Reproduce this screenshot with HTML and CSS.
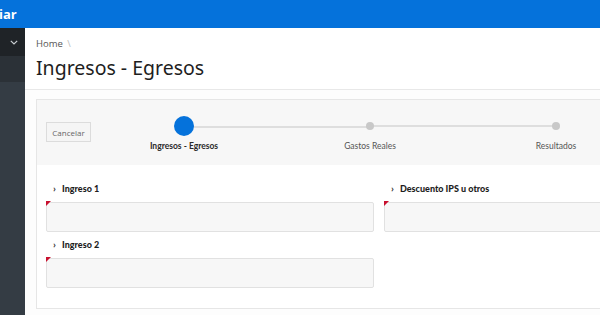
FILE: index.html
```html
<!DOCTYPE html>
<html lang="es">
<head>
<meta charset="utf-8">
<title>Ingresos - Egresos</title>
<link rel="stylesheet" href="styles.css">
</head>
<body>
<header class="topbar"><span class="app-name">iar</span></header>
<div class="layout">
  <nav class="sidebar">
    <div class="nav-item nav-top">
      <svg class="chev-down" width="8" height="5" viewBox="0 0 8 5"><path d="M0.8 0.8 L4 4 L7.2 0.8" fill="none" stroke="#c9ced2" stroke-width="1.2"/></svg>
    </div>
    <div class="nav-item nav-second"></div>
    <div class="nav-rest"></div>
  </nav>
  <main class="main">
    <div class="page-header">
      <div class="breadcrumb">Home <span class="sep">\</span></div>
      <h1 class="title">Ingresos - Egresos</h1>
    </div>
    <div class="body">
      <section class="region">
        <div class="wizard-bar">
          <button class="btn-cancel">Cancelar</button>
          <ol class="steps">
            <li class="step current"><span class="marker big"></span><span class="step-label">Ingresos - Egresos</span></li>
            <li class="step"><span class="marker"></span><span class="step-label">Gastos Reales</span></li>
            <li class="step last"><span class="marker"></span><span class="step-label">Resultados</span></li>
          </ol>
        </div>
        <div class="fields">
          <div class="col">
            <div class="field">
              <div class="field-label"><span class="chev">›</span>Ingreso 1</div>
              <div class="input required"></div>
            </div>
            <div class="field">
              <div class="field-label"><span class="chev">›</span>Ingreso 2</div>
              <div class="input required"></div>
            </div>
          </div>
          <div class="col">
            <div class="field">
              <div class="field-label"><span class="chev">›</span>Descuento IPS u otros</div>
              <div class="input required"></div>
            </div>
          </div>
        </div>
      </section>
    </div>
  </main>
</div>
</body>
</html>
```

FILE: styles.css
```css
* { box-sizing: border-box; }
html, body { margin: 0; padding: 0; }
body {
  width: 600px;
  height: 315px;
  overflow: hidden;
  background: #ffffff;
  font-family: "Open Sans", "Noto Sans", sans-serif;
  color: #202020;
}
.topbar {
  height: 28px;
  background: #0572db;
  display: flex;
  align-items: center;
}
.app-name {
  color: #ffffff;
  font-weight: 700;
  font-size: 13px;
  margin-left: -1px;
  font-family: "Open Sans", sans-serif;
}
.layout {
  display: flex;
  height: 287px;
}
.sidebar {
  width: 25px;
  flex: none;
  display: flex;
  flex-direction: column;
  background: #343c44;
}
.nav-item { height: 27px; display: flex; align-items: center; justify-content: center; }
.nav-top { background: #1f2327; height: 28px; padding-left: 2px; }
.nav-second { background: #2b3137; height: 26px; }
.nav-rest { flex: 1; background: #343c44; }
.main {
  flex: none;
  width: 720px;
  display: flex;
  flex-direction: column;
}
.page-header {
  padding: 9px 11px 0 11px;
  height: 62px;
  border-bottom: 1px solid #e8e8e8;
}
.breadcrumb {
  font-size: 9.5px;
  color: #555;
  line-height: 14px;
}
.breadcrumb .sep { color: #bbb; margin-left: 2px; }
.title {
  margin: 4px 0 0 0;
  font-size: 19.5px;
  font-weight: 400;
  line-height: 26px;
  color: #1e1e1e;
  font-family: "Noto Sans", "Open Sans", sans-serif;
}
.body {
  padding: 9px 0 0 11px;
  background: #fdfdfd;
  flex: 1;
}
.region {
  width: 690px;
  height: 210px;
  border: 1px solid #e6e6e6;
  background: #ffffff;
}
.wizard-bar {
  height: 65px;
  background: #f7f7f7;
  display: flex;
  align-items: flex-start;
  padding: 22px 0 0 9px;
}
.btn-cancel {
  width: 45px;
  height: 20px;
  border: 1px solid #dcdcdc;
  background: #f5f5f5;
  color: #666;
  font-size: 8px;
  font-family: "Open Sans", sans-serif;
  padding: 0;
  flex: none;
}
.steps {
  display: flex;
  list-style: none;
  margin: 0 0 0 0;
  padding: 0;
}
.step {
  width: 186px;
  flex: none;
  position: relative;
  display: flex;
  flex-direction: column;
  align-items: center;
  height: 40px;
}
.step::after {
  content: "";
  position: absolute;
  top: 3px;
  left: 50%;
  width: 100%;
  height: 2px;
  background: #dedede;
  z-index: 0;
}
.step.last::after { display: none; }
.marker {
  width: 8px;
  height: 8px;
  border-radius: 50%;
  background: #c8c8c8;
  margin-top: 0;
  position: relative;
  z-index: 1;
}
.marker.big {
  width: 20px;
  height: 20px;
  background: #0572db;
  margin-top: -6px;
}
.step.current::after { top: 4px; }
.step-label {
  font-size: 8.5px;
  color: #555;
  margin-top: 10px;
  line-height: 12px;
  white-space: nowrap;
  font-family: Lato, "Open Sans", sans-serif;
}
.step.current .step-label { font-weight: 700; color: #2a2a2a; margin-top: 4px; }
.fields {
  display: flex;
  gap: 10px;
  padding: 18px 0 0 9px;
}
.col {
  width: 328px;
  display: flex;
  flex-direction: column;
  gap: 7px;
}
.field-label {
  font-family: Lato, "Open Sans", sans-serif;
  font-weight: 900;
  font-size: 9px;
  color: #1d1d1d;
  line-height: 12px;
  height: 12px;
  padding-left: 7px;
  display: flex;
  align-items: center;
}
.chev {
  font-weight: 700;
  font-size: 10px;
  width: 9px;
  color: #333;
  position: relative;
  top: -1px;
}
.input {
  margin-top: 7px;
  height: 30px;
  background: #f7f7f7;
  border: 1px solid #e1e1e1;
  border-radius: 2px;
  position: relative;
}
.input.required::before {
  content: "";
  position: absolute;
  top: -2px;
  left: -1px;
  width: 0;
  height: 0;
  border-top: 5px solid #c8102e;
  border-right: 5px solid transparent;
}
```
